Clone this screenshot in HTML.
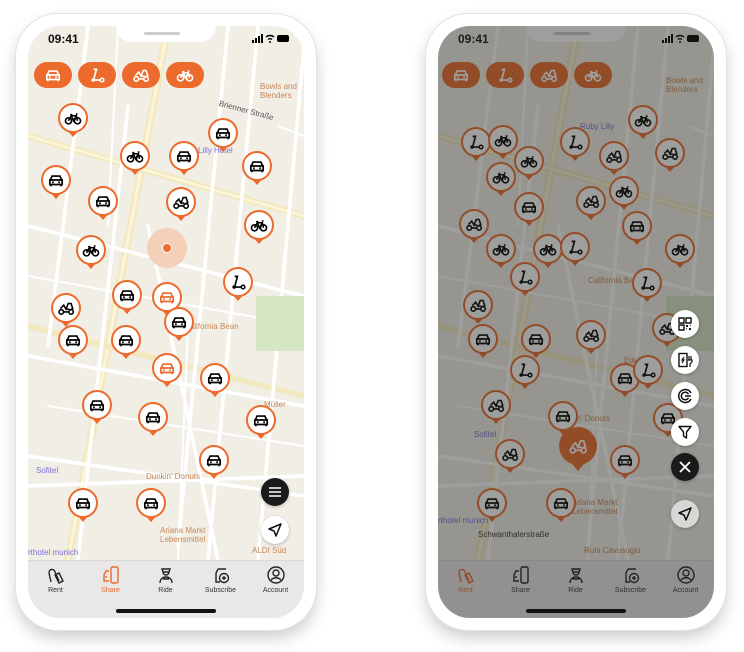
<!DOCTYPE html>
<html><head><meta charset="utf-8"><style>
*{margin:0;padding:0;box-sizing:border-box}
body{width:744px;height:652px;background:#fff;position:relative;overflow:hidden;font-family:"Liberation Sans",sans-serif}
.phone{position:absolute;top:14px;width:300px;height:616px;border-radius:42px;background:#fff;box-shadow:0 0 0 1px #e2e2e2,0 8px 16px rgba(0,0,0,.2)}
.scr{position:absolute;left:12px;top:12px;width:276px;height:592px;border-radius:32px;overflow:hidden;background:#f1eee6}
.notch{position:absolute;left:88px;top:0;width:100px;height:16px;background:#fff;border-radius:0 0 16px 16px;z-index:6}
.notch:after{content:"";position:absolute;left:28px;top:6px;width:36px;height:3px;border-radius:2px;background:#ccc}
.time{position:absolute;left:20px;top:6px;font-size:12px;font-weight:bold;color:#111;z-index:6}
.st{position:absolute;right:14px;top:8px;z-index:6}
.chip{position:absolute;top:36px;width:38px;height:26px;border-radius:13px;background:#ec6a2b;z-index:3}
.chip svg{position:absolute;left:10px;top:4px}
.m{position:absolute;width:30px;height:36px;z-index:2}
.m .c{position:absolute;left:0;top:0;width:30px;height:30px;border-radius:50%;background:#fff;border:2px solid #ec6a2b}
.m .t{position:absolute;left:9px;top:27px;border-left:6px solid transparent;border-right:6px solid transparent;border-top:7px solid #ec6a2b}
.m svg{position:absolute;left:6px;top:6px}
.nav{position:absolute;left:0;top:534px;width:276px;height:58px;background:#e9e8e6;border-top:1px solid #d8d8d8;z-index:4}
.it{position:absolute;top:4px;width:55px;text-align:center;font-size:7px;color:#333}
.it svg{display:block;margin:0 auto 2px}
.home{position:absolute;left:88px;bottom:5px;width:100px;height:4px;border-radius:2px;background:#111}
.btn{position:absolute;width:28px;height:28px;border-radius:50%;background:#fff;z-index:8;box-shadow:0 1px 3px rgba(0,0,0,.25)}
.btn svg{position:absolute;left:6px;top:6px}
.ov{position:absolute;left:0;top:0;width:276px;height:592px;background:rgba(40,40,38,.45);z-index:7}
.lbl{position:absolute;font-size:8px;z-index:1}
</style></head><body>
<svg width="0" height="0" style="position:absolute">
<defs>
<symbol id="car" viewBox="0 0 16 16"><path d="M3 8 4.5 4.5h7L13 8M2.5 8h11v4h-11zM3.5 12v1.5M12.5 12v1.5M4.5 10h1.5M10 10h1.5" fill="none" stroke="currentColor" stroke-width="1.5"/></symbol>
<symbol id="bike" viewBox="0 0 16 16"><circle cx="4" cy="10.5" r="2.7" fill="none" stroke="currentColor" stroke-width="1.4"/><circle cx="12" cy="10.5" r="2.7" fill="none" stroke="currentColor" stroke-width="1.4"/><path d="M4 10.5 6.5 6h4.5L12 10.5M6.5 6 8.5 10.5 11 6M5.5 5h2M10.5 4.5h1.5" fill="none" stroke="currentColor" stroke-width="1.4"/></symbol>
<symbol id="sc" viewBox="0 0 16 16"><path d="M5 3h2.5L5 12.5h6.5" fill="none" stroke="currentColor" stroke-width="1.5"/><circle cx="4.5" cy="12.5" r="1.5" fill="currentColor"/><circle cx="12.5" cy="12.5" r="1.6" fill="none" stroke="currentColor" stroke-width="1.3"/></symbol>
<symbol id="mo" viewBox="0 0 16 16"><circle cx="3.8" cy="11.5" r="2" fill="none" stroke="currentColor" stroke-width="1.4"/><circle cx="12.5" cy="11.5" r="2" fill="none" stroke="currentColor" stroke-width="1.4"/><path d="M3 8.5 6 5.5 8 9 10 4h2.5l1.5 4.5-2 1M5.8 11.5h4.5M8 9h3" fill="none" stroke="currentColor" stroke-width="1.4"/></symbol>
<symbol id="roads" viewBox="0 0 276 534"><g fill="none" stroke-linecap="round">
<path d="M140 0 40 534" stroke="#f3e9c0" stroke-width="8"/><path d="M140 0 40 534" stroke="#fbf5dc" stroke-width="3"/>
<path d="M0 110 276 190" stroke="#f3e9c0" stroke-width="7"/><path d="M0 110 276 190" stroke="#fbf5dc" stroke-width="2.5"/>
<path d="M0 300 276 370" stroke="#f3e9c0" stroke-width="6"/>
<g stroke="#fff" stroke-width="3.5"><path d="M0 200 276 270M0 330 276 380M0 430 276 470M230 0 180 534M100 80 50 534M200 0 150 520M276 20 230 534M60 0 20 320M0 460 276 450M120 200 190 534"/></g>
<g stroke="#fff" stroke-width="2"><path d="M0 250 276 300M20 380 276 420M90 0 80 200M160 300 150 534M250 100 276 110"/></g>
</g><rect x="228" y="270" width="48" height="55" fill="#d5e6c5"/></symbol>
</defs></svg>

<!-- LEFT PHONE -->
<div class="phone" style="left:16px">
<div class="scr">
<svg style="position:absolute;left:0;top:0" width="276" height="534"><use href="#roads"/></svg>
<div class="lbl" style="left:232px;top:56px;color:#c9875a;font-size:8px">Bowls and<br>Blenders</div>
<div class="lbl" style="left:170px;top:120px;color:#7a6fd8">Lilly Hotel</div>
<div class="lbl" style="left:156px;top:296px;color:#c9875a">California Bean</div>
<div class="lbl" style="left:236px;top:374px;color:#c9875a">Müller</div>
<div class="lbl" style="left:8px;top:440px;color:#7a6fd8">Sofitel</div>
<div class="lbl" style="left:118px;top:446px;color:#c9875a">Dunkin' Donuts</div>
<div class="lbl" style="left:132px;top:500px;color:#c9875a">Ariana Markt<br>Lebensmittel</div>
<div class="lbl" style="left:0;top:522px;color:#7a6fd8">rthotel munich</div>
<div class="lbl" style="left:224px;top:520px;color:#c9875a">ALDI Süd</div>
<div class="lbl" style="left:190px;top:80px;color:#555;transform:rotate(15deg)">Brienner Straße</div>
<div style="position:absolute;left:119px;top:202px;width:40px;height:40px;border-radius:50%;background:#f4d0b8"></div>
<div style="position:absolute;left:134px;top:217px;width:10px;height:10px;border-radius:50%;background:#ec6a2b;border:1px solid #fff"></div>
<div class="time">09:41</div>
<svg class="st" width="38" height="9"><rect x="0" y="6" width="2" height="3"/><rect x="3" y="4" width="2" height="5"/><rect x="6" y="2" width="2" height="7"/><rect x="9" y="0" width="2" height="9"/><path d="M14 3a6 6 0 0 1 8 0M16 5.5a3 3 0 0 1 4 0" stroke="#000" fill="none" stroke-width="1.5"/><circle cx="18" cy="8" r="1"/><rect x="25" y="1" width="12" height="7" rx="2"/></svg>
<div class="notch"></div>
<div class="chip" style="left:6px"><svg width="18" height="18" color="#fff"><use href="#car"/></svg></div>
<div class="chip" style="left:50px"><svg width="18" height="18" color="#fff"><use href="#sc"/></svg></div>
<div class="chip" style="left:94px"><svg width="18" height="18" color="#fff"><use href="#mo"/></svg></div>
<div class="chip" style="left:138px"><svg width="18" height="18" color="#fff"><use href="#bike"/></svg></div>

<div class="m" style="left:30px;top:77px"><div class="t"></div><div class="c"></div><svg width="18" height="18"><use href="#bike"/></svg></div>
<div class="m" style="left:92px;top:115px"><div class="t"></div><div class="c"></div><svg width="18" height="18"><use href="#bike"/></svg></div>
<div class="m" style="left:141px;top:115px"><div class="t"></div><div class="c"></div><svg width="18" height="18"><use href="#car"/></svg></div>
<div class="m" style="left:180px;top:92px"><div class="t"></div><div class="c"></div><svg width="18" height="18"><use href="#car"/></svg></div>
<div class="m" style="left:214px;top:125px"><div class="t"></div><div class="c"></div><svg width="18" height="18"><use href="#car"/></svg></div>
<div class="m" style="left:13px;top:139px"><div class="t"></div><div class="c"></div><svg width="18" height="18"><use href="#car"/></svg></div>
<div class="m" style="left:60px;top:160px"><div class="t"></div><div class="c"></div><svg width="18" height="18"><use href="#car"/></svg></div>
<div class="m" style="left:138px;top:161px"><div class="t"></div><div class="c"></div><svg width="18" height="18"><use href="#mo"/></svg></div>
<div class="m" style="left:216px;top:184px"><div class="t"></div><div class="c"></div><svg width="18" height="18"><use href="#bike"/></svg></div>
<div class="m" style="left:48px;top:209px"><div class="t"></div><div class="c"></div><svg width="18" height="18"><use href="#bike"/></svg></div>
<div class="m" style="left:195px;top:241px"><div class="t"></div><div class="c"></div><svg width="18" height="18"><use href="#sc"/></svg></div>
<div class="m" style="left:84px;top:254px"><div class="t"></div><div class="c"></div><svg width="18" height="18"><use href="#car"/></svg></div>
<div class="m" style="left:124px;top:256px"><div class="t"></div><div class="c"></div><svg width="18" height="18" color="#ec6a2b"><use href="#car"/></svg></div>
<div class="m" style="left:23px;top:267px"><div class="t"></div><div class="c"></div><svg width="18" height="18"><use href="#mo"/></svg></div>
<div class="m" style="left:136px;top:281px"><div class="t"></div><div class="c"></div><svg width="18" height="18"><use href="#car"/></svg></div>
<div class="m" style="left:30px;top:299px"><div class="t"></div><div class="c"></div><svg width="18" height="18"><use href="#car"/></svg></div>
<div class="m" style="left:83px;top:299px"><div class="t"></div><div class="c"></div><svg width="18" height="18"><use href="#car"/></svg></div>
<div class="m" style="left:124px;top:327px"><div class="t"></div><div class="c"></div><svg width="18" height="18" color="#ec6a2b"><use href="#car"/></svg></div>
<div class="m" style="left:172px;top:337px"><div class="t"></div><div class="c"></div><svg width="18" height="18"><use href="#car"/></svg></div>
<div class="m" style="left:54px;top:364px"><div class="t"></div><div class="c"></div><svg width="18" height="18"><use href="#car"/></svg></div>
<div class="m" style="left:110px;top:376px"><div class="t"></div><div class="c"></div><svg width="18" height="18"><use href="#car"/></svg></div>
<div class="m" style="left:218px;top:379px"><div class="t"></div><div class="c"></div><svg width="18" height="18"><use href="#car"/></svg></div>
<div class="m" style="left:171px;top:419px"><div class="t"></div><div class="c"></div><svg width="18" height="18"><use href="#car"/></svg></div>
<div class="m" style="left:40px;top:462px"><div class="t"></div><div class="c"></div><svg width="18" height="18"><use href="#car"/></svg></div>
<div class="m" style="left:108px;top:462px"><div class="t"></div><div class="c"></div><svg width="18" height="18"><use href="#car"/></svg></div>

<div class="btn" style="left:233px;top:452px;background:#1a1a1a"><svg width="16" height="16"><path d="M2 4h12M2 8h12M2 12h12" stroke="#fff" stroke-width="1.6"/></svg></div>
<div class="btn" style="left:233px;top:490px"><svg width="16" height="16"><path d="M14 2 2 7l5 2 2 5z" fill="none" stroke="#111" stroke-width="1.5" stroke-linejoin="round"/></svg></div>

<div class="nav">
<div class="it" style="left:0"><svg width="20" height="20"><path d="M5 17 3 8a3 3 0 0 1 6-1l4 9M9 10l4-2 4 8-4 2z" fill="none" stroke="#222" stroke-width="1.4"/></svg>Rent</div>
<div class="it" style="left:55px;color:#ec6a2b"><svg width="20" height="20"><rect x="10" y="2" width="7" height="16" rx="1.5" fill="none" stroke="#ec6a2b" stroke-width="1.4"/><path d="M8 6H5l-2 4v6h5M4 12h2" fill="none" stroke="#ec6a2b" stroke-width="1.4"/></svg>Share</div>
<div class="it" style="left:110px"><svg width="20" height="20"><path d="M6 4h8l-1 3H7zM7 7a3 3 0 0 0 6 0M4 18c0-4 3-6 6-6s6 2 6 6M7 14h6" fill="none" stroke="#222" stroke-width="1.4"/></svg>Ride</div>
<div class="it" style="left:165px"><svg width="20" height="20"><path d="M7 4h8M5 8v9h4M5 8l2-4" fill="none" stroke="#222" stroke-width="1.4"/><circle cx="13" cy="13" r="4.5" fill="none" stroke="#222" stroke-width="1.4"/><path d="M13 11v4M11 13h4" stroke="#222" stroke-width="1.4"/></svg>Subscribe</div>
<div class="it" style="left:220px"><svg width="20" height="20"><circle cx="10" cy="10" r="8" fill="none" stroke="#222" stroke-width="1.4"/><circle cx="10" cy="8" r="3" fill="none" stroke="#222" stroke-width="1.4"/><path d="M5 15c3-3 7-3 10 0" fill="none" stroke="#222" stroke-width="1.4"/></svg>Account</div>
<div class="home"></div>
</div>
</div></div>

<!-- RIGHT PHONE -->
<div class="phone" style="left:426px">
<div class="scr">
<svg style="position:absolute;left:0;top:0" width="276" height="534"><use href="#roads"/></svg>
<div class="lbl" style="left:228px;top:50px;color:#c9875a">Bowls and<br>Blenders</div>
<div class="lbl" style="left:142px;top:96px;color:#7a6fd8">Ruby Lilly</div>
<div class="lbl" style="left:150px;top:250px;color:#c9875a">California Bean</div>
<div class="lbl" style="left:186px;top:330px;color:#c9875a">Edeka</div>
<div class="lbl" style="left:36px;top:404px;color:#7a6fd8">Sofitel</div>
<div class="lbl" style="left:118px;top:388px;color:#c9875a">Dunkin' Donuts</div>
<div class="lbl" style="left:134px;top:472px;color:#c9875a">Ariana Markt<br>Lebensmittel</div>
<div class="lbl" style="left:0;top:490px;color:#7a6fd8">rthotel munich</div>
<div class="lbl" style="left:40px;top:504px;color:#333">Schwanthalerstraße</div>
<div class="lbl" style="left:146px;top:520px;color:#c9875a">Ruhi Cavusoglu</div>
<div class="time">09:41</div>
<svg class="st" width="38" height="9"><rect x="0" y="6" width="2" height="3"/><rect x="3" y="4" width="2" height="5"/><rect x="6" y="2" width="2" height="7"/><rect x="9" y="0" width="2" height="9"/><path d="M14 3a6 6 0 0 1 8 0M16 5.5a3 3 0 0 1 4 0" stroke="#000" fill="none" stroke-width="1.5"/><circle cx="18" cy="8" r="1"/><rect x="25" y="1" width="12" height="7" rx="2"/></svg>
<div class="notch"></div>
<div class="chip" style="left:4px"><svg width="18" height="18" color="#fff"><use href="#car"/></svg></div>
<div class="chip" style="left:48px"><svg width="18" height="18" color="#fff"><use href="#sc"/></svg></div>
<div class="chip" style="left:92px"><svg width="18" height="18" color="#fff"><use href="#mo"/></svg></div>
<div class="chip" style="left:136px"><svg width="18" height="18" color="#fff"><use href="#bike"/></svg></div>

<div class="m" style="left:23px;top:101px"><div class="t"></div><div class="c"></div><svg width="18" height="18"><use href="#sc"/></svg></div>
<div class="m" style="left:50px;top:99px"><div class="t"></div><div class="c"></div><svg width="18" height="18"><use href="#bike"/></svg></div>
<div class="m" style="left:122px;top:101px"><div class="t"></div><div class="c"></div><svg width="18" height="18"><use href="#sc"/></svg></div>
<div class="m" style="left:190px;top:79px"><div class="t"></div><div class="c"></div><svg width="18" height="18"><use href="#bike"/></svg></div>
<div class="m" style="left:76px;top:120px"><div class="t"></div><div class="c"></div><svg width="18" height="18"><use href="#bike"/></svg></div>
<div class="m" style="left:161px;top:115px"><div class="t"></div><div class="c"></div><svg width="18" height="18"><use href="#mo"/></svg></div>
<div class="m" style="left:217px;top:112px"><div class="t"></div><div class="c"></div><svg width="18" height="18"><use href="#mo"/></svg></div>
<div class="m" style="left:48px;top:136px"><div class="t"></div><div class="c"></div><svg width="18" height="18"><use href="#bike"/></svg></div>
<div class="m" style="left:171px;top:150px"><div class="t"></div><div class="c"></div><svg width="18" height="18"><use href="#bike"/></svg></div>
<div class="m" style="left:138px;top:160px"><div class="t"></div><div class="c"></div><svg width="18" height="18"><use href="#mo"/></svg></div>
<div class="m" style="left:76px;top:166px"><div class="t"></div><div class="c"></div><svg width="18" height="18"><use href="#car"/></svg></div>
<div class="m" style="left:184px;top:185px"><div class="t"></div><div class="c"></div><svg width="18" height="18"><use href="#car"/></svg></div>
<div class="m" style="left:21px;top:183px"><div class="t"></div><div class="c"></div><svg width="18" height="18"><use href="#mo"/></svg></div>
<div class="m" style="left:48px;top:208px"><div class="t"></div><div class="c"></div><svg width="18" height="18"><use href="#bike"/></svg></div>
<div class="m" style="left:95px;top:208px"><div class="t"></div><div class="c"></div><svg width="18" height="18"><use href="#bike"/></svg></div>
<div class="m" style="left:122px;top:206px"><div class="t"></div><div class="c"></div><svg width="18" height="18"><use href="#sc"/></svg></div>
<div class="m" style="left:227px;top:208px"><div class="t"></div><div class="c"></div><svg width="18" height="18"><use href="#bike"/></svg></div>
<div class="m" style="left:72px;top:236px"><div class="t"></div><div class="c"></div><svg width="18" height="18"><use href="#sc"/></svg></div>
<div class="m" style="left:194px;top:242px"><div class="t"></div><div class="c"></div><svg width="18" height="18"><use href="#sc"/></svg></div>
<div class="m" style="left:25px;top:264px"><div class="t"></div><div class="c"></div><svg width="18" height="18"><use href="#mo"/></svg></div>
<div class="m" style="left:214px;top:287px"><div class="t"></div><div class="c"></div><svg width="18" height="18"><use href="#mo"/></svg></div>
<div class="m" style="left:30px;top:298px"><div class="t"></div><div class="c"></div><svg width="18" height="18"><use href="#car"/></svg></div>
<div class="m" style="left:83px;top:298px"><div class="t"></div><div class="c"></div><svg width="18" height="18"><use href="#car"/></svg></div>
<div class="m" style="left:138px;top:294px"><div class="t"></div><div class="c"></div><svg width="18" height="18"><use href="#mo"/></svg></div>
<div class="m" style="left:72px;top:329px"><div class="t"></div><div class="c"></div><svg width="18" height="18"><use href="#sc"/></svg></div>
<div class="m" style="left:172px;top:337px"><div class="t"></div><div class="c"></div><svg width="18" height="18"><use href="#car"/></svg></div>
<div class="m" style="left:195px;top:329px"><div class="t"></div><div class="c"></div><svg width="18" height="18"><use href="#sc"/></svg></div>
<div class="m" style="left:43px;top:364px"><div class="t"></div><div class="c"></div><svg width="18" height="18"><use href="#mo"/></svg></div>
<div class="m" style="left:110px;top:375px"><div class="t"></div><div class="c"></div><svg width="18" height="18"><use href="#car"/></svg></div>
<div class="m" style="left:215px;top:377px"><div class="t"></div><div class="c"></div><svg width="18" height="18"><use href="#car"/></svg></div>
<div class="m" style="left:57px;top:413px"><div class="t"></div><div class="c"></div><svg width="18" height="18"><use href="#mo"/></svg></div>
<div class="m" style="left:172px;top:419px"><div class="t"></div><div class="c"></div><svg width="18" height="18"><use href="#car"/></svg></div>
<div class="m" style="left:39px;top:462px"><div class="t"></div><div class="c"></div><svg width="18" height="18"><use href="#car"/></svg></div>
<div class="m" style="left:108px;top:462px"><div class="t"></div><div class="c"></div><svg width="18" height="18"><use href="#car"/></svg></div>
<div style="position:absolute;left:121px;top:401px;width:38px;height:50px;z-index:2">
<div style="position:absolute;left:0;top:0;width:38px;height:38px;border-radius:50%;background:#ec6a2b"></div>
<div style="position:absolute;left:9px;top:32px;border-left:10px solid transparent;border-right:10px solid transparent;border-top:12px solid #ec6a2b"></div>
<svg style="position:absolute;left:9px;top:9px" width="20" height="20" color="#fff"><use href="#mo"/></svg></div>

<div class="nav">
<div class="it" style="left:0;color:#ec6a2b"><svg width="20" height="20"><path d="M5 17 3 8a3 3 0 0 1 6-1l4 9M9 10l4-2 4 8-4 2z" fill="none" stroke="#ec6a2b" stroke-width="1.4"/></svg>Rent</div>
<div class="it" style="left:55px"><svg width="20" height="20"><rect x="10" y="2" width="7" height="16" rx="1.5" fill="none" stroke="#222" stroke-width="1.4"/><path d="M8 6H5l-2 4v6h5M4 12h2" fill="none" stroke="#222" stroke-width="1.4"/></svg>Share</div>
<div class="it" style="left:110px"><svg width="20" height="20"><path d="M6 4h8l-1 3H7zM7 7a3 3 0 0 0 6 0M4 18c0-4 3-6 6-6s6 2 6 6M7 14h6" fill="none" stroke="#222" stroke-width="1.4"/></svg>Ride</div>
<div class="it" style="left:165px"><svg width="20" height="20"><path d="M7 4h8M5 8v9h4M5 8l2-4" fill="none" stroke="#222" stroke-width="1.4"/><circle cx="13" cy="13" r="4.5" fill="none" stroke="#222" stroke-width="1.4"/><path d="M13 11v4M11 13h4" stroke="#222" stroke-width="1.4"/></svg>Subscribe</div>
<div class="it" style="left:220px"><svg width="20" height="20"><circle cx="10" cy="10" r="8" fill="none" stroke="#222" stroke-width="1.4"/><circle cx="10" cy="8" r="3" fill="none" stroke="#222" stroke-width="1.4"/><path d="M5 15c3-3 7-3 10 0" fill="none" stroke="#222" stroke-width="1.4"/></svg>Account</div>
</div>
<div class="ov"></div>
<div class="home" style="z-index:9"></div>

<div class="btn" style="left:233px;top:284px"><svg width="16" height="16"><path d="M2 2h5v5H2zM9 2h5v5H9zM2 9h5v5H2z" fill="none" stroke="#111" stroke-width="1.4"/><path d="M9 9h2v2H9zM12 12h2v2h-2zM12 9h2v1M9 12h1v2" fill="#111"/></svg></div>
<div class="btn" style="left:233px;top:320px"><svg width="16" height="16"><rect x="2" y="1.5" width="8" height="13" fill="none" stroke="#111" stroke-width="1.4"/><path d="M7 5 5 8h2l-2 3M12 4v4M14 4v4M11 8h4v2l-2 2v3" fill="none" stroke="#111" stroke-width="1.2"/></svg></div>
<div class="btn" style="left:233px;top:356px"><svg width="16" height="16"><path d="M14 5A6.5 6.5 0 1 0 14 11M11.5 6.2A3.8 3.8 0 1 0 11.5 9.8M8 8h6" fill="none" stroke="#111" stroke-width="1.5"/></svg></div>
<div class="btn" style="left:233px;top:392px"><svg width="16" height="16"><path d="M2 2.5h12L9.5 8v6L6.5 12V8z" fill="none" stroke="#111" stroke-width="1.4" stroke-linejoin="round"/></svg></div>
<div class="btn" style="left:233px;top:427px;background:#1a1a1a"><svg width="16" height="16"><path d="M3 3l10 10M13 3 3 13" stroke="#fff" stroke-width="1.8"/></svg></div>
<div class="btn" style="left:233px;top:474px;background:#d8d8d6"><svg width="16" height="16"><path d="M14 2 2 7l5 2 2 5z" fill="none" stroke="#111" stroke-width="1.5" stroke-linejoin="round"/></svg></div>
</div></div>
</body></html>
